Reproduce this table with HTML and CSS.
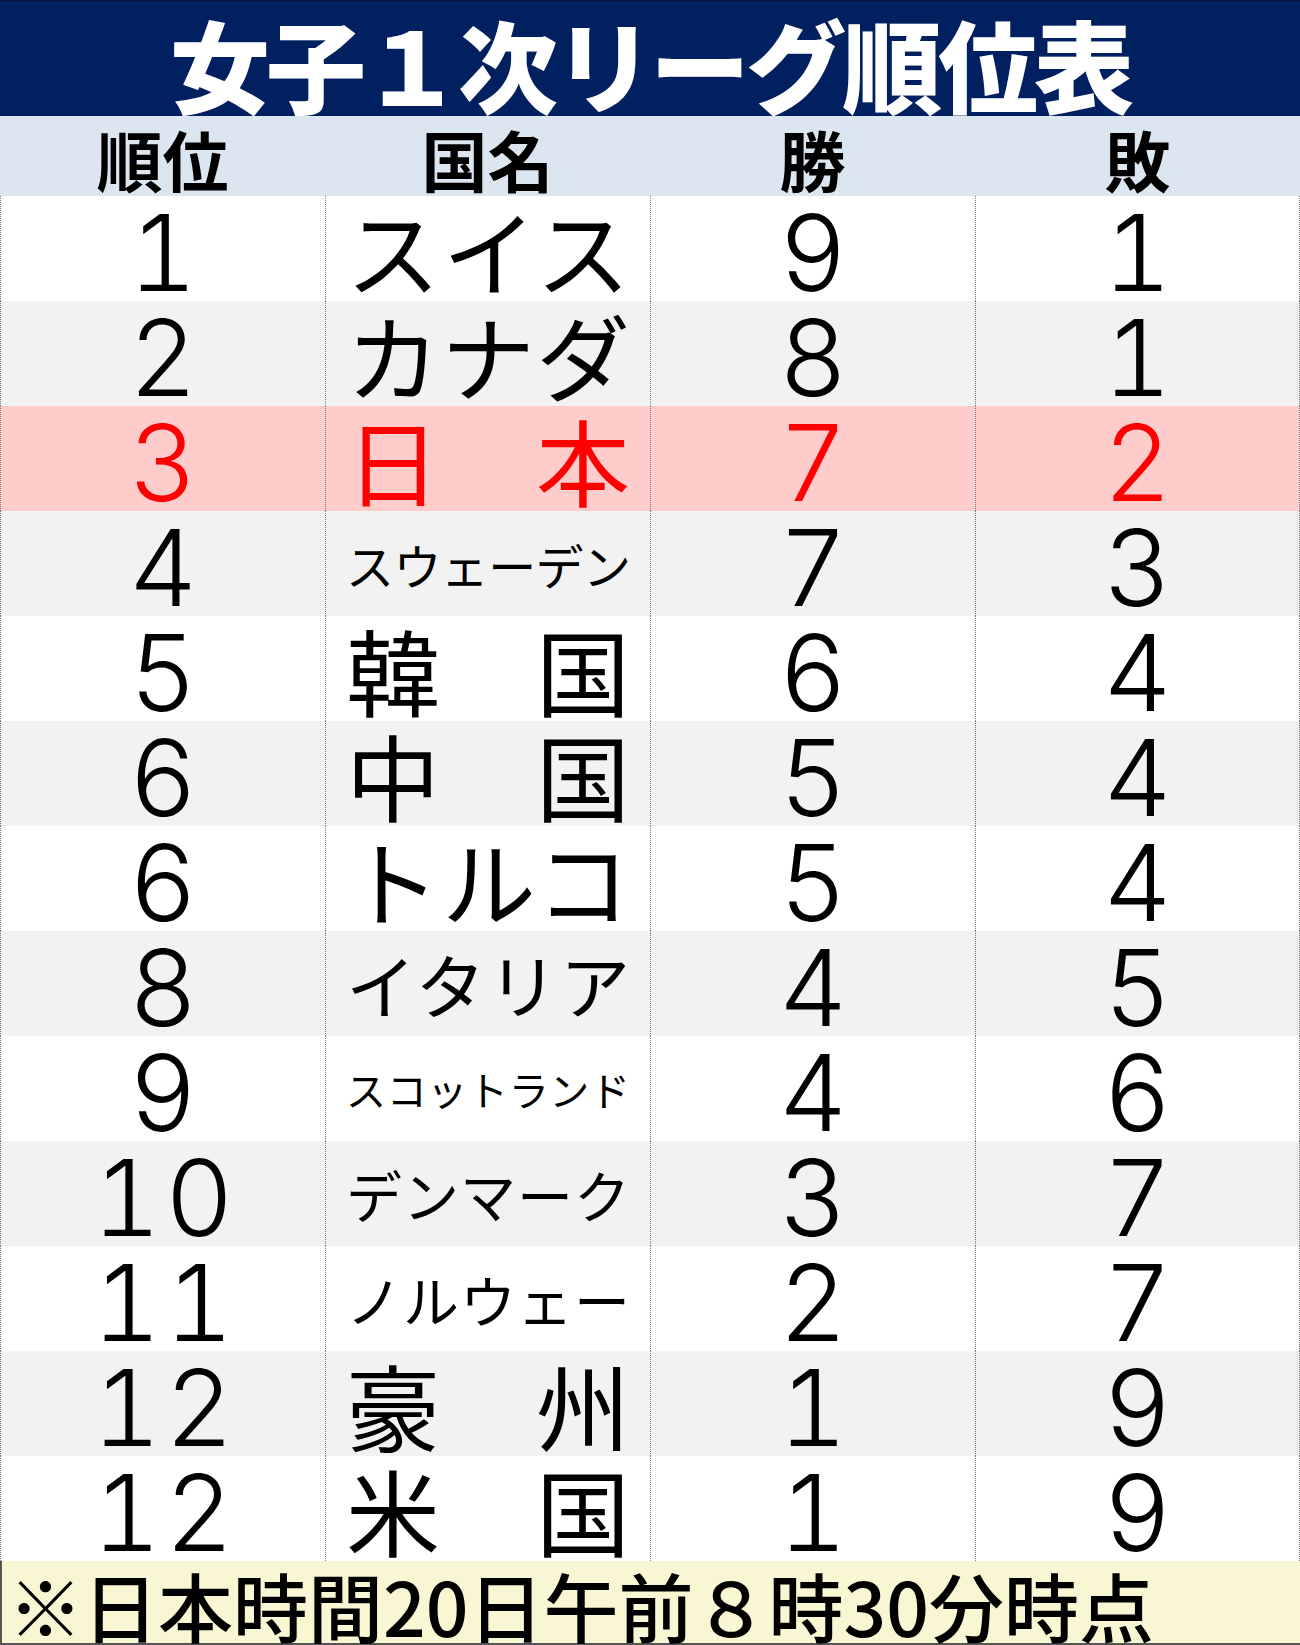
FILE: index.html
```html
<!DOCTYPE html>
<html lang="ja">
<head>
<meta charset="utf-8">
<title>女子1次リーグ順位表</title>
<link rel="stylesheet" href="styles.css">
</head>
<body>
<div class="board">
  <div class="title">女子１次リーグ順位表</div>
  <div class="head">
    <div class="hcell">順位</div>
    <div class="hcell">国名</div>
    <div class="hcell">勝</div>
    <div class="hcell">敗</div>
  </div>

  <div class="row bg-white">
    <div class="cell num">1</div>
    <div class="cell name"><span class="nm f3">スイス</span></div>
    <div class="cell num">9</div>
    <div class="cell num">1</div>
  </div>
  <div class="row bg-gray">
    <div class="cell num">2</div>
    <div class="cell name"><span class="nm f3">カナダ</span></div>
    <div class="cell num">8</div>
    <div class="cell num">1</div>
  </div>
  <div class="row bg-pink red">
    <div class="cell num">3</div>
    <div class="cell name"><span class="nm f2">日本</span></div>
    <div class="cell num">7</div>
    <div class="cell num">2</div>
  </div>
  <div class="row bg-gray">
    <div class="cell num">4</div>
    <div class="cell name"><span class="nm f6">スウェーデン</span></div>
    <div class="cell num">7</div>
    <div class="cell num">3</div>
  </div>
  <div class="row bg-white">
    <div class="cell num">5</div>
    <div class="cell name"><span class="nm f2">韓国</span></div>
    <div class="cell num">6</div>
    <div class="cell num">4</div>
  </div>
  <div class="row bg-gray">
    <div class="cell num">6</div>
    <div class="cell name"><span class="nm f2">中国</span></div>
    <div class="cell num">5</div>
    <div class="cell num">4</div>
  </div>
  <div class="row bg-white">
    <div class="cell num">6</div>
    <div class="cell name"><span class="nm f3">トルコ</span></div>
    <div class="cell num">5</div>
    <div class="cell num">4</div>
  </div>
  <div class="row bg-gray">
    <div class="cell num">8</div>
    <div class="cell name"><span class="nm f4">イタリア</span></div>
    <div class="cell num">4</div>
    <div class="cell num">5</div>
  </div>
  <div class="row bg-white">
    <div class="cell num">9</div>
    <div class="cell name"><span class="nm f7">スコットランド</span></div>
    <div class="cell num">4</div>
    <div class="cell num">6</div>
  </div>
  <div class="row bg-gray">
    <div class="cell num">10</div>
    <div class="cell name"><span class="nm f5">デンマーク</span></div>
    <div class="cell num">3</div>
    <div class="cell num">7</div>
  </div>
  <div class="row bg-white">
    <div class="cell num">11</div>
    <div class="cell name"><span class="nm f5">ノルウェー</span></div>
    <div class="cell num">2</div>
    <div class="cell num">7</div>
  </div>
  <div class="row bg-gray">
    <div class="cell num">12</div>
    <div class="cell name"><span class="nm f2">豪州</span></div>
    <div class="cell num">1</div>
    <div class="cell num">9</div>
  </div>
  <div class="row bg-white">
    <div class="cell num">12</div>
    <div class="cell name"><span class="nm f2">米国</span></div>
    <div class="cell num">1</div>
    <div class="cell num">9</div>
  </div>

  <div class="foot">※日本時間20日午前８時30分時点</div>
</div>
</body>
</html>
```

FILE: styles.css
```css
* { box-sizing: border-box; }

html, body {
  margin: 0;
  padding: 0;
  background: #ffffff;
}

.board {
  width: 1300px;
  height: 1645px;
  display: flex;
  flex-direction: column;
  font-family: "Noto Sans CJK JP", "Noto Sans", sans-serif;
  color: #000000;
}

.title {
  height: 116px;
  flex: none;
  background: #002060;
  border-top: 1px solid #0b1633;
  color: #ffffff;
  display: flex;
  align-items: center;
  justify-content: center;
  padding-top: 8px;
  font-size: 100px;
  font-weight: 900;
  line-height: 1;
  letter-spacing: -4px;
  white-space: nowrap;
}

.head {
  height: 80px;
  flex: none;
  background: #dce6f1;
  display: grid;
  grid-template-columns: repeat(4, 1fr);
}

.hcell {
  display: flex;
  align-items: flex-end;
  justify-content: center;
  padding-bottom: 5px;
  font-size: 66px;
  font-weight: 700;
  line-height: 1;
}

.row {
  height: 105px;
  flex: none;
  display: grid;
  grid-template-columns: repeat(4, 1fr);
}

.bg-white { background: #ffffff; }
.bg-gray { background: #f2f2f2; }
.bg-pink { background: #ffcccc; }
.red { color: #ff0000; }

.cell {
  display: flex;
  align-items: center;
  justify-content: center;
  border-left: 1px dotted #7a7a7a;
  line-height: 1;
}

.cell:last-child {
  border-right: 1px dotted #7a7a7a;
}

.num {
  font-family: "Inter", "Noto Sans", sans-serif;
  font-weight: 300;
  font-size: 106px;
  line-height: 100px;
  font-variant-numeric: tabular-nums;
  letter-spacing: 4px;
  text-indent: 4px;
  padding-top: 7px;
}

.name {
  padding: 0 20px 2px 20px;
}

.nm {
  display: block;
  width: 100%;
  text-align: justify;
  text-align-last: justify;
  white-space: nowrap;
  line-height: 1;
}

.f2 { font-size: 94px; }
.f3 { font-size: 94px; }
.f4 { font-size: 70px; }
.f5 { font-size: 56px; }
.f6 { font-size: 48px; letter-spacing: -1px; }
.f7 { font-size: 40px; }

.foot {
  flex: 1;
  background: #f9f7d3;
  border-left: 2px solid #555555;
  border-bottom: 2px solid #555555;
  display: flex;
  align-items: flex-end;
  padding-left: 6px;
  padding-bottom: 1px;
  font-size: 75px;
  font-weight: 500;
  line-height: 1;
  white-space: nowrap;
}
```
